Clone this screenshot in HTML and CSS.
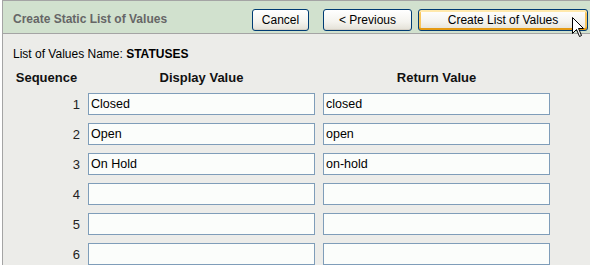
FILE: index.html
```html
<!DOCTYPE html>
<html lang="en">
<head>
    <meta charset="UTF-8">
    <title>Create Static List of Values</title>
    <link rel="stylesheet" href="styles.css">
</head>
<body>
    <div class="panel">
        <div class="panel-head">
            <span class="title">Create Static List of Values</span>
            <button class="btn btn-cancel">Cancel</button>
            <button class="btn btn-prev">&lt; Previous</button>
            <button class="btn btn-create">Create List of Values</button>
        </div>
        <div class="panel-body">
            <div class="lov-name">List of Values Name: <b>STATUSES</b></div>
            <div class="lov-grid">
                <div class="col-head">Sequence</div>
                <div class="col-head">Display Value</div>
                <div class="col-head">Return Value</div>

                <div class="seq">1</div>
                <input type="text" value="Closed">
                <input type="text" value="closed">

                <div class="seq">2</div>
                <input type="text" value="Open">
                <input type="text" value="open">

                <div class="seq">3</div>
                <input type="text" value="On Hold">
                <input type="text" value="on-hold">

                <div class="seq">4</div>
                <input type="text" value="">
                <input type="text" value="">

                <div class="seq">5</div>
                <input type="text" value="">
                <input type="text" value="">

                <div class="seq">6</div>
                <input type="text" value="">
                <input type="text" value="">
            </div>
        </div>
    </div>
    <svg class="cursor" width="13" height="21" viewBox="0 0 13 21">
        <path d="M0.5 0.5 L0.5 16.5 L4.5 12.5 L7.5 19.5 L9.5 18.5 L6.5 11.5 L11.5 11.5 Z" fill="#fff" stroke="#000" stroke-width="1"/>
    </svg>
</body>
</html>
```

FILE: styles.css
```css
* {
    margin: 0;
    padding: 0;
    box-sizing: border-box;
}
body {
    font-family: 'Liberation Sans', Arial, sans-serif;
    font-size: 12px;
    background: #ffffff;
    width: 590px;
    height: 265px;
    overflow: hidden;
    position: relative;
}
.panel {
    margin-left: 2px;
    border-top: 1px solid #a4a4a4;
    border-left: 1px solid #a4a4a4;
    background: #ecece9;
    height: 265px;
}
.panel-head {
    display: flex;
    align-items: center;
    height: 33px;
    padding: 5px 2px 0 10px;
    background: #d1e1ce;
    border-bottom: 1px solid #a4a4a4;
}
.title {
    flex: 1;
    font-weight: bold;
    color: #666666;
    margin-bottom: 2px;
}
.btn {
    height: 22px;
    font-family: 'Liberation Sans', Arial, sans-serif;
    font-size: 12px;
    color: #000;
    border: 1px solid #003c74;
    border-radius: 3px;
    background: linear-gradient(to bottom, #ffffff 0%, #f4f3ee 60%, #e3e0d6 100%);
    box-shadow: inset 0 -1px #d6d0c5;
}
.btn-cancel {
    width: 57px;
}
.btn-prev {
    width: 89px;
    margin-left: 14px;
}
.btn-create {
    width: 170px;
    margin-left: 6px;
    box-shadow: inset 0 2px #ffe9ac, inset 0 -2px #e59a12, inset 2px 0 #f8c65c, inset -2px 0 #f8c65c;
}
.panel-body {
    padding: 13px 0 0 10px;
    color: #000;
}
.lov-name {
    line-height: 14px;
}
.lov-grid {
    display: grid;
    grid-template-columns: 67px 227px 227px;
    column-gap: 8px;
    row-gap: 8px;
    margin-top: 10px;
}
.col-head {
    font-weight: bold;
    font-size: 13px;
    line-height: 14px;
    text-align: center;
    color: #111;
}
.seq {
    text-align: right;
    align-self: center;
    font-size: 13px;
    color: #222;
}
.lov-grid input {
    height: 22px;
    border: 1px solid #7f9db9;
    background: #fbfdfb;
    padding: 0 2px;
    font-family: 'Liberation Sans', Arial, sans-serif;
    font-size: 12.5px;
    color: #000;
}
.cursor {
    position: absolute;
    left: 572px;
    top: 17px;
}
```
